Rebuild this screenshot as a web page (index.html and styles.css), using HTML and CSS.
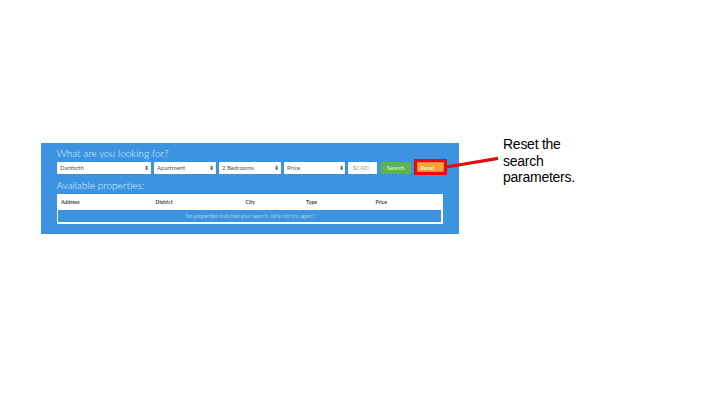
FILE: index.html
```html
<!DOCTYPE html>
<html lang="en">
<head>
<meta charset="utf-8">
<title>Property search</title>
<link rel="stylesheet" href="styles.css">
</head>
<body>
<main class="slide">
  <section class="panel">
    <h2 class="heading">What are you looking for?</h2>
    <div class="filters">
      <div class="field">Danforth<svg class="arrows" viewBox="0 0 4 6"><path d="M0 2.5 2 0 4 2.5ZM0 3.5H4L2 6Z"/></svg></div>
      <div class="field">Apartment<svg class="arrows" viewBox="0 0 4 6"><path d="M0 2.5 2 0 4 2.5ZM0 3.5H4L2 6Z"/></svg></div>
      <div class="field">2 Bedrooms<svg class="arrows" viewBox="0 0 4 6"><path d="M0 2.5 2 0 4 2.5ZM0 3.5H4L2 6Z"/></svg></div>
      <div class="field">Price<svg class="arrows" viewBox="0 0 4 6"><path d="M0 2.5 2 0 4 2.5ZM0 3.5H4L2 6Z"/></svg></div>
      <div class="field amount">$CAD</div>
      <div class="button search">Search</div>
      <div class="button reset">Reset</div>
    </div>
    <h2 class="heading results">Available properties:</h2>
    <div class="table">
      <div class="columns"><span>Address</span><span>District</span><span>City</span><span>Type</span><span>Price</span></div>
      <div class="empty">No properties matched your search. Why not try again?</div>
    </div>
  </section>
  <p class="note">Reset the<br>search<br>parameters.</p>
  <svg class="callout" viewBox="0 0 720 405"><rect x="415.6" y="160.6" width="29.8" height="12.8"/><path d="M446.5 167 498 158.4"/></svg>
</main>
</body>
</html>
```
FILE: styles.css
```css
* { box-sizing: border-box; }
body { margin: 0; background: #fff; }
.slide {
  position: relative;
  display: flex;
  align-items: flex-start;
  width: 720px;
  height: 405px;
  padding: 143px 0 0 41px;
  overflow: hidden;
}
.panel {
  flex: none;
  width: 418px;
  height: 91px;
  padding: 4px 16px 0 15.6px;
  background: #3c94e1;
  font-family: Lato, sans-serif;
}
.heading {
  margin: 0;
  height: 15px;
  font-size: 10.05px;
  line-height: 13px;
  font-weight: 300;
  color: #dceefc;
  white-space: nowrap;
}
.results { margin-top: 6px; height: 10.5px; }
.filters {
  display: grid;
  grid-template-columns: 94px 62px 62px 61.5px 29px 30px 30px;
  column-gap: 3px;
  height: 11px;
}
.field {
  display: flex;
  align-items: center;
  justify-content: space-between;
  padding: 0 2px 1px 3.4px;
  background: #fff;
  border-radius: 1px;
  font-size: 6px;
  line-height: 10px;
  color: #555;
}
.arrows { width: 3.2px; height: 5.8px; fill: #444; }
.amount { color: #999; padding-left: 4.6px; }
.button {
  border-radius: 1px;
  font-size: 6px;
  line-height: 12px;
  text-align: center;
  color: #edf8e8;
}
.search { background: #5cb54f; margin-left: 0.5px; margin-right: -0.5px; }
.reset { background: #f0a534; margin-left: 2px; margin-right: -2px; padding-right: 5px; }
.table {
  width: 386.4px;
  height: 30.5px;
  margin-top: 4px;
  padding: 0 1.5px;
  background: #fff;
}
.columns {
  display: grid;
  grid-template-columns: 94.5px 90px 60.5px 69.5px 1fr;
  height: 16px;
  padding-left: 2.9px;
  font-size: 5.2px;
  line-height: 16px;
  font-weight: 700;
  color: #444;
}
.empty {
  height: 12.5px;
  background: #3c94e1;
  font-size: 5.35px;
  line-height: 13px;
  text-align: center;
  color: #a9d0f2;
}
.note {
  margin: -7px 0 0 44px;
  font: 14px/16.5px "Liberation Sans", Arial, sans-serif;
  letter-spacing: -0.26px;
  color: #000;
  white-space: nowrap;
}
.callout {
  position: absolute;
  inset: 0;
  width: 720px;
  height: 405px;
  fill: none;
  stroke: #e20c12;
  stroke-width: 3.2;
}
```
